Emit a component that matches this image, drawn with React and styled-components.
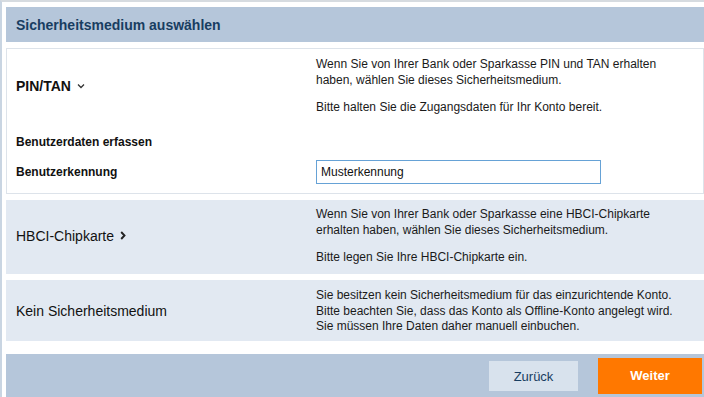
import React from "react";
import styled, { createGlobalStyle } from "styled-components";

const GlobalStyle = createGlobalStyle`
  html, body {
    margin: 0;
    padding: 0;
    background: #ffffff;
    font-family: "Liberation Sans", Arial, sans-serif;
    color: #1a1a1a;
  }
`;

const Frame = styled.div`
  box-sizing: border-box;
  height: 397px;
  overflow: hidden;
  border-left: 2px solid #c9d5e2;
  border-top: 2px solid #d6dbe0;
  padding: 5px 0 0 4px;
  display: flex;
  flex-direction: column;
`;

const Header = styled.div`
  height: 35px;
  flex: none;
  background: #b5c6da;
  display: flex;
  align-items: center;
  padding-left: 10px;
  margin-bottom: 6px;
`;

const Title = styled.h1`
  margin: 0;
  font-size: 14px;
  font-weight: bold;
  color: #183d61;
`;

const Panel = styled.div`
  flex: none;
  box-sizing: border-box;
  display: grid;
  grid-template-columns: 309px 1fr;
  align-items: center;
  align-content: start;
  margin-bottom: 6px;
  background: ${({ $active }) => ($active ? "#ffffff" : "#e2e9f2")};
  border: 1px solid ${({ $active }) => ($active ? "#dde3ea" : "#e2e9f2")};
  height: ${({ $h }) => $h}px;
  padding-top: ${({ $pt }) => $pt}px;
`;

const Label = styled.div`
  padding-left: 9px;
  font-size: 14px;
  font-weight: ${({ $bold }) => ($bold ? "bold" : "normal")};
  color: #111;
  display: flex;
  align-items: center;
  gap: 6px;
`;

const FieldLabel = styled.div`
  padding-left: 9px;
  font-size: 12px;
  font-weight: bold;
  color: #111;
  margin-top: ${({ $mt }) => $mt || 0}px;
  line-height: 16px;
`;

const Desc = styled.div`
  font-size: 12px;
  line-height: ${({ $lh }) => $lh || 16}px;
  color: #1a1a1a;
  padding-right: 20px;

  p {
    margin: 0;
  }
  p + p {
    margin-top: 11px;
  }
`;

const Input = styled.input`
  box-sizing: border-box;
  width: 285px;
  height: 24px;
  border: 1px solid #66a2d6;
  padding: 0 4px;
  font-family: "Liberation Sans", Arial, sans-serif;
  font-size: 12px;
  color: #111;
  outline: none;
  margin-top: ${({ $mt }) => $mt || 0}px;
`;

const Footer = styled.div`
  margin-top: 7px;
  flex: 1;
  background: #b5c6da;
  display: flex;
  justify-content: flex-end;
  align-items: center;
  gap: 20px;
  padding-right: 2px;
`;

const Button = styled.button`
  border: none;
  font-family: "Liberation Sans", Arial, sans-serif;
  font-size: 13px;
  cursor: pointer;
  background: ${({ $primary }) => ($primary ? "#ff7800" : "#d8e2ed")};
  color: ${({ $primary }) => ($primary ? "#ffffff" : "#183d61")};
  font-weight: ${({ $primary }) => ($primary ? "bold" : "normal")};
  width: ${({ $primary }) => ($primary ? 104 : 89)}px;
  height: ${({ $primary }) => ($primary ? 36 : 30)}px;
  margin-top: ${({ $primary }) => ($primary ? 0 : 1)}px;
`;

const ChevronDown = () => (
  <svg width="8" height="6" viewBox="0 0 8 6" fill="none">
    <path d="M1 1.5 L4 4.5 L7 1.5" stroke="#333" strokeWidth="1.3" />
  </svg>
);

const ChevronRight = () => (
  <svg width="6" height="9" viewBox="0 0 6 9" fill="none">
    <path d="M1.2 1 L4.5 4.5 L1.2 8" stroke="#222" strokeWidth="1.9" />
  </svg>
);

export default function App() {
  return (
    <>
      <GlobalStyle />
      <Frame>
        <Header>
          <Title>Sicherheitsmedium auswählen</Title>
        </Header>

        <Panel $active $h={146} $pt={7}>
          <Label $bold>
            PIN/TAN <ChevronDown />
          </Label>
          <Desc>
            <p>
              Wenn Sie von Ihrer Bank oder Sparkasse PIN und TAN erhalten
              <br />
              haben, wählen Sie dieses Sicherheitsmedium.
            </p>
            <p>Bitte halten Sie die Zugangsdaten für Ihr Konto bereit.</p>
          </Desc>
          <FieldLabel $mt={19}>Benutzerdaten erfassen</FieldLabel>
          <div />
          <FieldLabel $mt={10}>Benutzerkennung</FieldLabel>
          <Input $mt={10} defaultValue="Musterkennung" autoFocus />
        </Panel>

        <Panel $h={74} $pt={5}>
          <Label>
            HBCI-Chipkarte <ChevronRight />
          </Label>
          <Desc>
            <p>
              Wenn Sie von Ihrer Bank oder Sparkasse eine HBCI-Chipkarte
              <br />
              erhalten haben, wählen Sie dieses Sicherheitsmedium.
            </p>
            <p>Bitte legen Sie Ihre HBCI-Chipkarte ein.</p>
          </Desc>
        </Panel>

        <Panel $h={61} $pt={7}>
          <Label>Kein Sicherheitsmedium</Label>
          <Desc $lh={15.5}>
            <p>
              Sie besitzen kein Sicherheitsmedium für das einzurichtende Konto.
              <br />
              Bitte beachten Sie, dass das Konto als Offline-Konto angelegt wird.
              <br />
              Sie müssen Ihre Daten daher manuell einbuchen.
            </p>
          </Desc>
        </Panel>

        <Footer>
          <Button>Zurück</Button>
          <Button $primary>Weiter</Button>
        </Footer>
      </Frame>
    </>
  );
}
